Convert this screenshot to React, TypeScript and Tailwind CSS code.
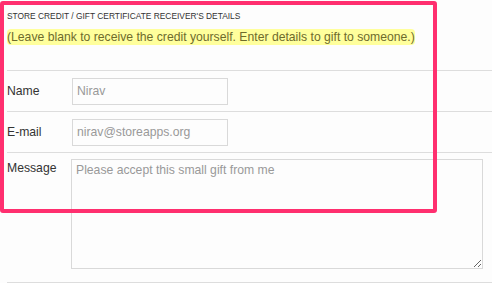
import React from "react";

export default function App() {
  return (
    <div className="relative w-[492px] h-[283px] overflow-hidden bg-[#fdfdfd] font-['Liberation_Sans',Arial,sans-serif]">
      <div className="pl-[7px]">
        <div className="pt-[11px] text-[8.4px] leading-[11px] text-[#333]">
          STORE CREDIT / GIFT CERTIFICATE RECEIVER'S DETAILS
        </div>
        <div className="mt-[8px] h-[40px] text-[12.2px] leading-[15px]">
          <span className="rounded-[4px] bg-[#ffff9c] py-[1px] text-[#6e6b2c]">
            (Leave blank to receive the credit yourself. Enter details to gift to someone.)
          </span>
        </div>
        <div className="flex h-[41px] items-center border-t border-[#dddddd] text-[12.2px] leading-[15px]">
          <label className="w-[65px] text-[#333]">Name</label>
          <input
            className="h-[27px] w-[156px] border border-[#d9d9d9] bg-[#fdfdfd] px-[4px] text-[12.2px] text-[#999] outline-none"
            defaultValue="Nirav"
          />
        </div>
        <div className="flex h-[41px] items-center border-t border-[#dddddd] text-[12.2px] leading-[15px]">
          <label className="w-[65px] text-[#333]">E-mail</label>
          <input
            className="h-[27px] w-[156px] border border-[#d9d9d9] bg-[#fdfdfd] px-[4px] text-[12.2px] text-[#999] outline-none"
            defaultValue="nirav@storeapps.org"
          />
        </div>
        <div className="flex h-[131px] items-start border-y border-[#dddddd] pt-[6px] text-[12.2px] leading-[15px]">
          <label className="mt-[2px] w-[64px] text-[#333]">Message</label>
          <textarea
            className="h-[110px] w-[412px] border border-[#d9d9d9] bg-[#fdfdfd] px-[4px] py-[3px] text-[12.2px] leading-[15px] text-[#999] outline-none"
            defaultValue="Please accept this small gift from me"
          />
        </div>
      </div>
      <div className="pointer-events-none absolute left-0 top-[1px] h-[212px] w-[437px] rounded-[3px] border-[4px] border-[#ff2f6f]" />
    </div>
  );
}
